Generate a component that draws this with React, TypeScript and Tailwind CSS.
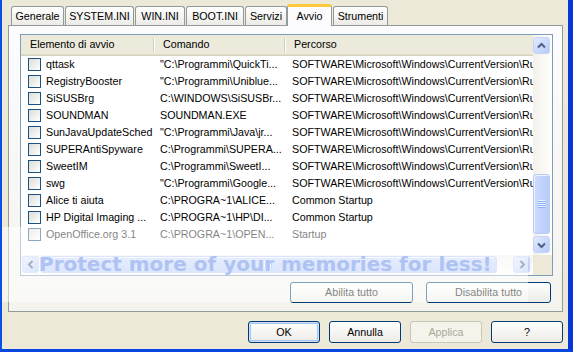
import React from "react";

const tabs = [
  { label: "Generale", w: "w-[53px]" },
  { label: "SYSTEM.INI", w: "w-[69px]" },
  { label: "WIN.INI", w: "w-[50px]" },
  { label: "BOOT.INI", w: "w-[58px]" },
  { label: "Servizi", w: "w-[42px]" },
  { label: "Avvio", w: "w-[45px]", active: true },
  { label: "Strumenti", w: "w-[55px]" },
];

const RUN = "SOFTWARE\\Microsoft\\Windows\\CurrentVersion\\Run";

const rows = [
  ["qttask", "\"C:\\Programmi\\QuickTi...", RUN],
  ["RegistryBooster", "\"C:\\Programmi\\Uniblue...", RUN],
  ["SiSUSBrg", "C:\\WINDOWS\\SiSUSBr...", RUN],
  ["SOUNDMAN", "SOUNDMAN.EXE", RUN],
  ["SunJavaUpdateSched", "\"C:\\Programmi\\Java\\jr...", RUN],
  ["SUPERAntiSpyware", "C:\\Programmi\\SUPERA...", RUN],
  ["SweetIM", "C:\\Programmi\\SweetI...", RUN],
  ["swg", "\"C:\\Programmi\\Google...", RUN],
  ["Alice ti aiuta", "C:\\PROGRA~1\\ALICE...", "Common Startup"],
  ["HP Digital Imaging ...", "C:\\PROGRA~1\\HP\\DI...", "Common Startup"],
  ["OpenOffice.org 3.1", "C:\\PROGRA~1\\OPEN...", "Startup"],
];

function Arrow({ dir }: { dir: "up" | "down" | "left" | "right" }) {
  const d = {
    up: "M1 5.5 L4.5 2 L8 5.5",
    down: "M1 2.5 L4.5 6 L8 2.5",
    left: "M5.5 1 L2 4.5 L5.5 8",
    right: "M2.5 1 L6 4.5 L2.5 8",
  }[dir];
  const vert = dir === "up" || dir === "down";
  return (
    <svg width={vert ? 9 : 8} height={vert ? 8 : 9} viewBox={vert ? "0 0 9 8" : "0 0 8 9"}>
      <path d={d} stroke="#4d6185" strokeWidth="2" fill="none" />
    </svg>
  );
}

function ScrollBtn({ dir }: { dir: "up" | "down" | "left" | "right" }) {
  return (
    <div className="w-[17px] h-[17px] shrink-0 flex items-center justify-center rounded-[3px] border border-[#c3d3fd] bg-gradient-to-br from-[#e3ebfe] to-[#b6cbf9]">
      <Arrow dir={dir} />
    </div>
  );
}

function Checkbox() {
  return <div className="w-[13px] h-[13px] shrink-0 border border-[#1c5180] bg-gradient-to-br from-[#dcdcd7] to-white" />;
}

function XpButton({ label, className, def, disabled }: { label: string; className?: string; def?: boolean; disabled?: boolean }) {
  return (
    <div
      className={
        "flex items-center justify-center rounded-[3px] border bg-gradient-to-b " +
        (disabled
          ? "border-[#c9c7ba] from-[#f5f4ea] to-[#f5f4ea] text-[#aca899] "
          : "border-[#003c74] from-white to-[#ecebe6] text-black ") +
        (def ? "shadow-[inset_0_0_0_1px_#cfe0fa,inset_0_0_0_2px_#a9c4f2] " : "") +
        (className ?? "")
      }
    >
      {label}
    </div>
  );
}

export default function App() {
  return (
    <div className="relative w-[573px] h-[352px] overflow-hidden bg-[#ece9d8] border-l-2 border-l-[#0a4fe6] border-r-[5px] border-r-[#0736d8] border-b-[3px] border-b-[#0a45e0] pl-[6px] pr-[5px] font-['Liberation_Sans',Arial,sans-serif] text-[10.7px] text-black">
      {/* Tabs */}
      <div className="flex items-end h-[25px] ml-[3px] gap-[1px]">
        {tabs.map((t) =>
          t.active ? (
            <div
              key={t.label}
              className={"relative z-10 -mb-px -ml-[1px] h-[22px] flex items-center justify-center rounded-t-[3px] border-x border-[#919b9c] border-t-[3px] border-t-[#ffc83c] bg-[#fcfcfe] pb-[1px] " + t.w}
            >
              {t.label}
            </div>
          ) : (
            <div
              key={t.label}
              className={"h-[19px] flex items-center justify-center rounded-t-[3px] border border-b-0 border-[#919b9c] bg-gradient-to-b from-white to-[#ecebe6] " + t.w}
            >
              {t.label}
            </div>
          )
        )}
      </div>

      {/* Panel */}
      <div className="h-[287px] border border-[#919b9c] bg-gradient-to-b from-[#fcfcfe] to-[#f4f3ee] pt-[8px] pl-[11px] pr-[9px] flex flex-col">
        <div className="h-[242px] border border-[#7f9db9] bg-white flex flex-col">
          <div className="flex h-[220px]">
            <div className="flex-1 min-w-0 overflow-hidden flex flex-col">
              {/* Header */}
              <div className="flex h-[21px] shrink-0 bg-[#ebeadb] shadow-[inset_0_-1px_0_#d6d2c2,inset_0_-2px_0_#e2dec6] whitespace-nowrap">
                <div className="w-[132px] shrink-0 flex items-center pl-[9px] pb-[2px]">Elemento di avvio</div>
                <div className="w-[2px] h-[15px] mt-[3px] bg-[#d0cebf] border-r border-white shrink-0" />
                <div className="w-[129px] shrink-0 flex items-center pl-[8px] pb-[2px]">Comando</div>
                <div className="w-[2px] h-[15px] mt-[3px] bg-[#d0cebf] border-r border-white shrink-0" />
                <div className="flex-1 flex items-center pl-[8px] pb-[2px]">Percorso</div>
              </div>
              {/* Rows */}
              {rows.map(([name, cmd, path]) => (
                <div key={name} className="flex h-[17px] shrink-0 items-center whitespace-nowrap">
                  <div className="w-[132px] shrink-0 flex items-center pl-[7px] gap-[5px] overflow-hidden">
                    <Checkbox />
                    <span>{name}</span>
                  </div>
                  <div className="w-[131px] shrink-0 pl-[7px] overflow-hidden">{cmd}</div>
                  <div className="flex-1 pl-[8px] overflow-hidden">{path}</div>
                </div>
              ))}
            </div>
            {/* Vertical scrollbar */}
            <div className="w-[19px] shrink-0 flex flex-col bg-gradient-to-r from-[#f3f1ec] to-[#fefefb] pt-[2px]">
              <ScrollBtn dir="up" />
              <div className="h-[120px]" />
              <div className="w-[17px] h-[60px] rounded-[3px] border border-[#b6cbf9] bg-gradient-to-r from-[#cbdafd] to-[#b8ccf9] shadow-[inset_1px_1px_0_#eef3fe] flex flex-col items-center justify-center gap-[1px]">
                {[0, 1, 2, 3].map((i) => (
                  <div key={i} className="w-[7px] h-[1px] bg-[#8cb0f8] shadow-[0_-1px_0_#eef4fe]" />
                ))}
              </div>
              <div className="h-[2px]" />
              <ScrollBtn dir="down" />
            </div>
          </div>
          {/* Horizontal scrollbar */}
          <div className="flex h-[20px] bg-gradient-to-b from-[#f3f1ec] to-[#fefefb]">
            <div className="flex flex-1 pl-[1px] pt-[1px]">
              <ScrollBtn dir="left" />
              <div className="ml-[1px] w-[457px] h-[17px] rounded-[3px] border border-[#b6cbf9] bg-gradient-to-b from-[#cbdafd] to-[#b8ccf9] shadow-[inset_1px_1px_0_#eef3fe] flex items-center justify-center gap-[1px]">
                {[0, 1, 2, 3].map((i) => (
                  <div key={i} className="w-[1px] h-[7px] bg-[#8cb0f8] shadow-[-1px_0_0_#eef4fe]" />
                ))}
              </div>
              <div className="flex-1" />
              <ScrollBtn dir="right" />
              <div className="w-[3px]" />
            </div>
            <div className="w-[19px] bg-[#ece9d8]" />
          </div>
        </div>
        <div className="mt-[6px] flex justify-end gap-[13px] mr-[2px]">
          <XpButton label="Abilita tutto" className="w-[123px] h-[21px]" />
          <XpButton label="Disabilita tutto" className="w-[125px] h-[21px]" />
        </div>
      </div>

      {/* Dialog buttons */}
      <div className="mt-[9px] flex justify-end gap-[9px]">
        <XpButton label="OK" def className="w-[72px] h-[22px]" />
        <XpButton label="Annulla" className="w-[72px] h-[22px]" />
        <XpButton label="Applica" disabled className="w-[72px] h-[22px]" />
        <XpButton label="?" className="w-[72px] h-[22px]" />
      </div>

      {/* Photo-host watermark */}
      <div className="absolute left-[-2px] top-[227px] w-[528px] h-[75px] bg-white/50">
        <div className="absolute left-[39px] top-[27px] whitespace-nowrap font-['DejaVu_Sans',Verdana,sans-serif] font-bold text-[20px] leading-[20px] text-[#afc3f3]">
          Protect more of your memories for less!
        </div>
      </div>
    </div>
  );
}
